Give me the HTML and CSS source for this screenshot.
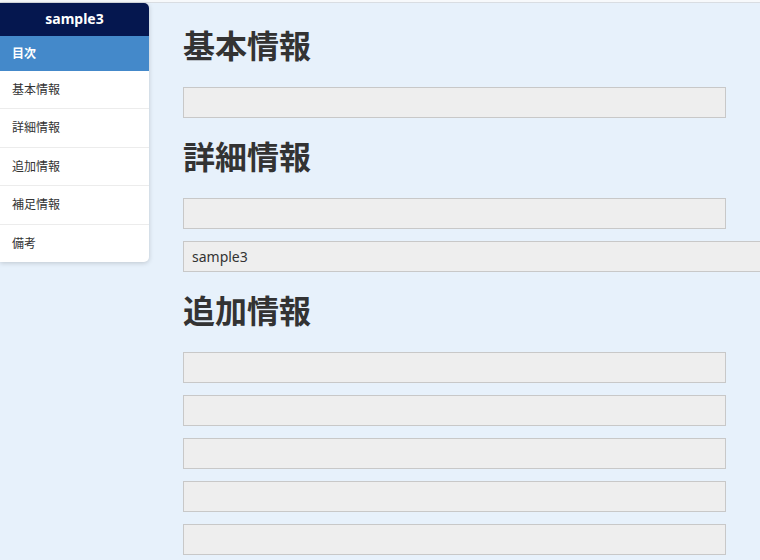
FILE: index.html
```html
<!DOCTYPE html>
<html lang="ja">
<head>
    <meta charset="UTF-8">
    <meta name="viewport" content="width=device-width, initial-scale=1.0">
    <title>sample3</title>
    <link rel="stylesheet" href="styles.css">
</head>
<body>
    <div class="topline"></div>
    <div class="page">
        <nav class="toc">
            <div class="toc-title">sample3</div>
            <div class="toc-head">目次</div>
            <a class="toc-item" href="#basic">基本情報</a>
            <a class="toc-item" href="#detail">詳細情報</a>
            <a class="toc-item" href="#extra">追加情報</a>
            <a class="toc-item" href="#supplement">補足情報</a>
            <a class="toc-item" href="#note">備考</a>
        </nav>
        <main class="content">
            <h1 id="basic">基本情報</h1>
            <input class="field" type="text">

            <h1 id="detail">詳細情報</h1>
            <input class="field" type="text">
            <input class="field wide" type="text" value="sample3">

            <h1 id="extra">追加情報</h1>
            <input class="field" type="text">
            <input class="field" type="text">
            <input class="field" type="text">
            <input class="field" type="text">
            <input class="field" type="text">
        </main>
    </div>
</body>
</html>
```

FILE: styles.css
```css
html, body {
    margin: 0;
    height: 100%;
    overflow: hidden;
}
body {
    background: #e7f1fb;
    font-family: "Noto Sans CJK JP", "Noto Sans", sans-serif;
    color: #333;
}
.topline {
    height: 2px;
    background: #f7f9fb;
    border-bottom: 1px solid #d9dde2;
}
.page {
    display: flex;
    align-items: flex-start;
    gap: 34px;
}
.toc {
    flex: 0 0 149px;
    display: flex;
    flex-direction: column;
    background: #fff;
    border-radius: 0 5px 5px 0;
    box-shadow: 0 1px 5px rgba(0, 0, 0, 0.18);
    overflow: hidden;
}
.toc-title {
    height: 33px;
    line-height: 31px;
    background: #05174f;
    color: #fff;
    font-family: "Noto Sans", sans-serif;
    font-weight: bold;
    font-size: 14px;
    text-align: center;
}
.toc-head {
    height: 35px;
    line-height: 33px;
    padding-left: 12px;
    background: #4489ca;
    color: #fff;
    font-weight: bold;
    font-size: 12px;
}
.toc-item {
    height: 37.4px;
    line-height: 35px;
    padding-left: 12px;
    font-size: 12px;
    color: #333;
    text-decoration: none;
    border-bottom: 1px solid #ececec;
}
.toc-item:last-child {
    border-bottom: none;
}
.content {
    flex: 1;
    min-width: 0;
    overflow: hidden;
    display: flex;
    flex-direction: column;
    align-items: flex-start;
}
.content h1 {
    margin: 14px 0 20px;
    font-size: 32px;
    line-height: 46px;
    font-weight: bold;
    color: #333;
}
.content h1:first-child {
    margin-top: 18px;
}
.field {
    box-sizing: border-box;
    width: 543px;
    height: 31px;
    margin: 0 0 12px;
    padding: 0 8px;
    background: #eeeeee;
    border: 1px solid #c8c8c8;
    font-family: "Noto Sans", sans-serif;
    font-size: 14px;
    color: #333;
    outline: none;
}
.field.wide {
    width: 640px;
    flex-shrink: 0;
}
.field + h1 {
    margin-top: 2px;
}
```
